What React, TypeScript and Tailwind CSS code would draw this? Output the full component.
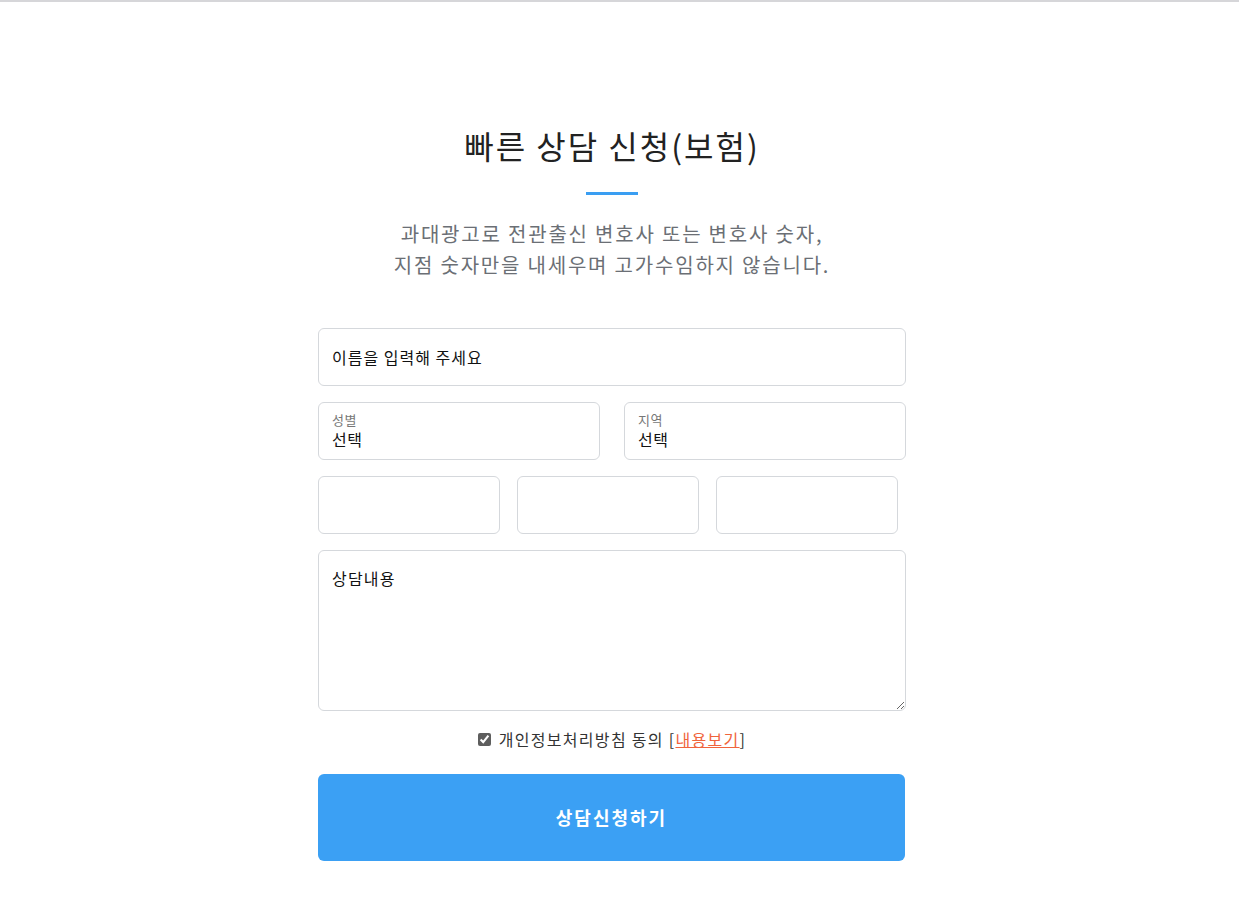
import React, { useState } from 'react';

const font = { fontFamily: '"Noto Sans CJK KR", "Noto Sans", sans-serif' };

const SelectBox: React.FC<{ label: string }> = ({ label }) => (
  <div className="w-[282px] h-[58px] border border-[#d5d8dc] rounded-[6px] px-[13px] pt-[9px] bg-white">
    <div className="text-[13px] leading-[15px] text-[#777] tracking-[0.5px]">{label}</div>
    <div className="mt-[2px] text-[16px] leading-[20px] text-[#111] tracking-[0.5px]">선택</div>
  </div>
);

const App: React.FC = () => {
  const [agree, setAgree] = useState(true);

  return (
    <div className="min-h-screen bg-white" style={font}>
      <div className="h-[2px] bg-[#d6d6d9]" />
      <div className="w-[1224px] flex flex-col items-center pt-[121px]">
        <h1 className="text-[32px] leading-[44px] font-normal text-[#222] tracking-[2px]">빠른 상담 신청(보험)</h1>
        <div className="mt-[25px] w-[52px] h-[3px] bg-[#3a9ef2]" />
        <p className="mt-[23px] text-center text-[20px] leading-[31px] text-[#6b6f75] tracking-[1.8px]">
          과대광고로 전관출신 변호사 또는 변호사 숫자,
          <br />
          지점 숫자만을 내세우며 고가수임하지 않습니다.
        </p>

        <form className="mt-[48px] w-[588px] flex flex-col" onSubmit={e => e.preventDefault()}>
          <input
            type="text"
            placeholder="이름을 입력해 주세요"
            className="w-full h-[58px] border border-[#d5d8dc] rounded-[6px] px-[13px] text-[16px] tracking-[1px] text-[#111] placeholder:text-[#111] outline-none"
          />

          <div className="mt-[16px] flex justify-between">
            <SelectBox label="성별" />
            <SelectBox label="지역" />
          </div>

          <div className="mt-[16px] flex gap-[17px]">
            <input type="text" className="w-[182px] h-[58px] border border-[#d5d8dc] rounded-[6px] px-[13px] text-[16px] outline-none" />
            <input type="text" className="w-[182px] h-[58px] border border-[#d5d8dc] rounded-[6px] px-[13px] text-[16px] outline-none" />
            <input type="text" className="w-[182px] h-[58px] border border-[#d5d8dc] rounded-[6px] px-[13px] text-[16px] outline-none" />
          </div>

          <textarea
            placeholder="상담내용"
            className="mt-[16px] w-full h-[161px] border border-[#d5d8dc] rounded-[6px] px-[13px] py-[15px] text-[16px] leading-[24px] tracking-[1.2px] text-[#111] placeholder:text-[#111] outline-none"
          />

          <div className="mt-[18px] h-[20px] flex items-center justify-center text-[16px] text-[#333] tracking-[1.3px]">
            <input
              type="checkbox"
              checked={agree}
              onChange={e => setAgree(e.target.checked)}
              className="w-[13px] h-[13px] mr-[8px] accent-[#5e5e5e]"
            />
            <span>
              개인정보처리방침 동의 [<a href="#" className="text-[#f0643c] underline">내용보기</a>]
            </span>
          </div>

          <button
            type="submit"
            className="mt-[25px] w-[587px] h-[87px] rounded-[6px] bg-[#3ba0f4] text-white text-[18px] font-bold tracking-[2px]"
          >
            상담신청하기
          </button>
        </form>
      </div>
    </div>
  );
};

export default App;
